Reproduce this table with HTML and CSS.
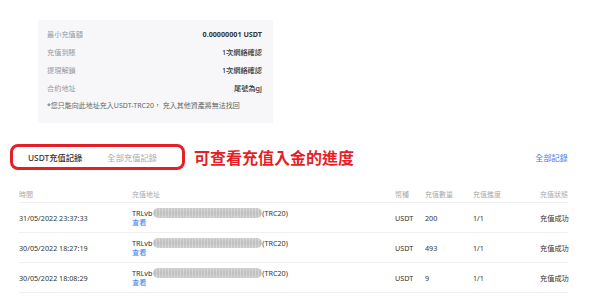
FILE: index.html
```html
<!DOCTYPE html>
<html lang="zh-Hant">
<head>
<meta charset="utf-8">
<link rel="stylesheet" href="styles.css">
</head>
<body>
<div class="page">
  <div class="info">
    <div class="info-row"><span class="label">最小充值額</span><span class="value strong">0.00000001 USDT</span></div>
    <div class="info-row"><span class="label">充值到賬</span><span class="value">1次網絡確認</span></div>
    <div class="info-row"><span class="label">提現解鎖</span><span class="value">1次網絡確認</span></div>
    <div class="info-row"><span class="label">合約地址</span><span class="value">尾號為gj</span></div>
    <div class="note">*您只能向此地址充入USDT-TRC20， 充入其他資產將無法找回</div>
  </div>

  <div class="tabs-bar">
    <div class="tabs">
      <span class="tab active">USDT充值記錄</span>
      <span class="tab">全部充值記錄</span>
    </div>
    <span class="annotation">可查看充值入金的進度</span>
    <a class="all-link">全部記錄</a>
  </div>

  <div class="table">
    <div class="row head">
      <span>時間</span><span>充值地址</span><span>幣種</span><span>充值數量</span><span>充值進度</span><span>充值狀態</span>
    </div>
    <div class="row">
      <span class="cell">31/05/2022 23:37:33</span>
      <span class="addr"><span class="addr-line">TRLvb<i class="blur"></i>(TRC20)</span><a class="view">查看</a></span>
      <span class="cell">USDT</span><span class="cell">200</span><span class="cell">1/1</span><span class="cell">充值成功</span>
    </div>
    <div class="row">
      <span class="cell">30/05/2022 18:27:19</span>
      <span class="addr"><span class="addr-line">TRLvb<i class="blur"></i>(TRC20)</span><a class="view">查看</a></span>
      <span class="cell">USDT</span><span class="cell">493</span><span class="cell">1/1</span><span class="cell">充值成功</span>
    </div>
    <div class="row">
      <span class="cell">30/05/2022 18:08:29</span>
      <span class="addr"><span class="addr-line">TRLvb<i class="blur"></i>(TRC20)</span><a class="view">查看</a></span>
      <span class="cell">USDT</span><span class="cell">9</span><span class="cell">1/1</span><span class="cell">充值成功</span>
    </div>
  </div>
</div>
</body>
</html>
```

FILE: styles.css
```css
* { box-sizing: border-box; }
html, body { margin: 0; padding: 0; background: #fff; }
body {
  width: 600px;
  height: 300px;
  overflow: hidden;
  font-family: "Noto Sans", "Noto Sans CJK TC", sans-serif;
  color: #333;
}
.page { padding-top: 20px; }

.info {
  margin-left: 38px;
  width: 235px;
  height: 103px;
  background: #f7f7f9;
  padding: 5px 11px 0 9px;
}
.info-row {
  display: flex;
  justify-content: space-between;
  align-items: center;
  height: 18px;
  font-size: 7.2px;
}
.label { color: #999; }
.value { color: #333; font-weight: 500; }
.value.strong { font-weight: 700; }
.note {
  margin-top: 2px;
  font-size: 7px;
  line-height: 14px;
  color: #666;
}

.tabs-bar {
  display: flex;
  align-items: center;
  margin-top: 21px;
  padding-left: 10px;
  padding-right: 32px;
  height: 26px;
}
.tabs {
  display: flex;
  align-items: center;
  gap: 25px;
  width: 175px;
  height: 26px;
  border: 3px solid #e51f28;
  border-radius: 8px;
  padding-left: 15px;
  font-size: 8.3px;
}
.tab { color: #aaa; }
.tab.active { color: #333; font-weight: 500; }
.annotation {
  margin-left: 9px;
  color: #e51f28;
  font-size: 16px;
  font-weight: 700;
  font-family: "Noto Sans CJK TC", sans-serif;
}
.all-link {
  margin-left: auto;
  color: #3b7cf0;
  font-size: 8.2px;
}

.table {
  margin-top: 16px;
  margin-left: 19px;
  width: 549px;
}
.row {
  display: grid;
  grid-template-columns: 113px 263px 30px 48px 67px 28px;
  align-items: center;
  height: 30px;
  border-bottom: 1px solid #efefef;
  font-size: 7.2px;
  white-space: nowrap;
}
.cell { color: #333; }
.row.head {
  height: 17px;
  color: #aaa;
  font-size: 7px;
}
.addr { display: flex; flex-direction: column; line-height: 9px; color: #333; }
.addr-line { display: flex; align-items: center; }
.blur {
  display: inline-block;
  width: 109px;
  height: 10px;
  margin-left: 1px;
  border-radius: 5px;
  background:
    repeating-linear-gradient(90deg, rgba(255,255,255,0.25) 0 1px, transparent 1px 3px),
    linear-gradient(#cdcdcd, #bfbfbf 50%, #cdcdcd);
}
.view { color: #3b7cf0; }
```
